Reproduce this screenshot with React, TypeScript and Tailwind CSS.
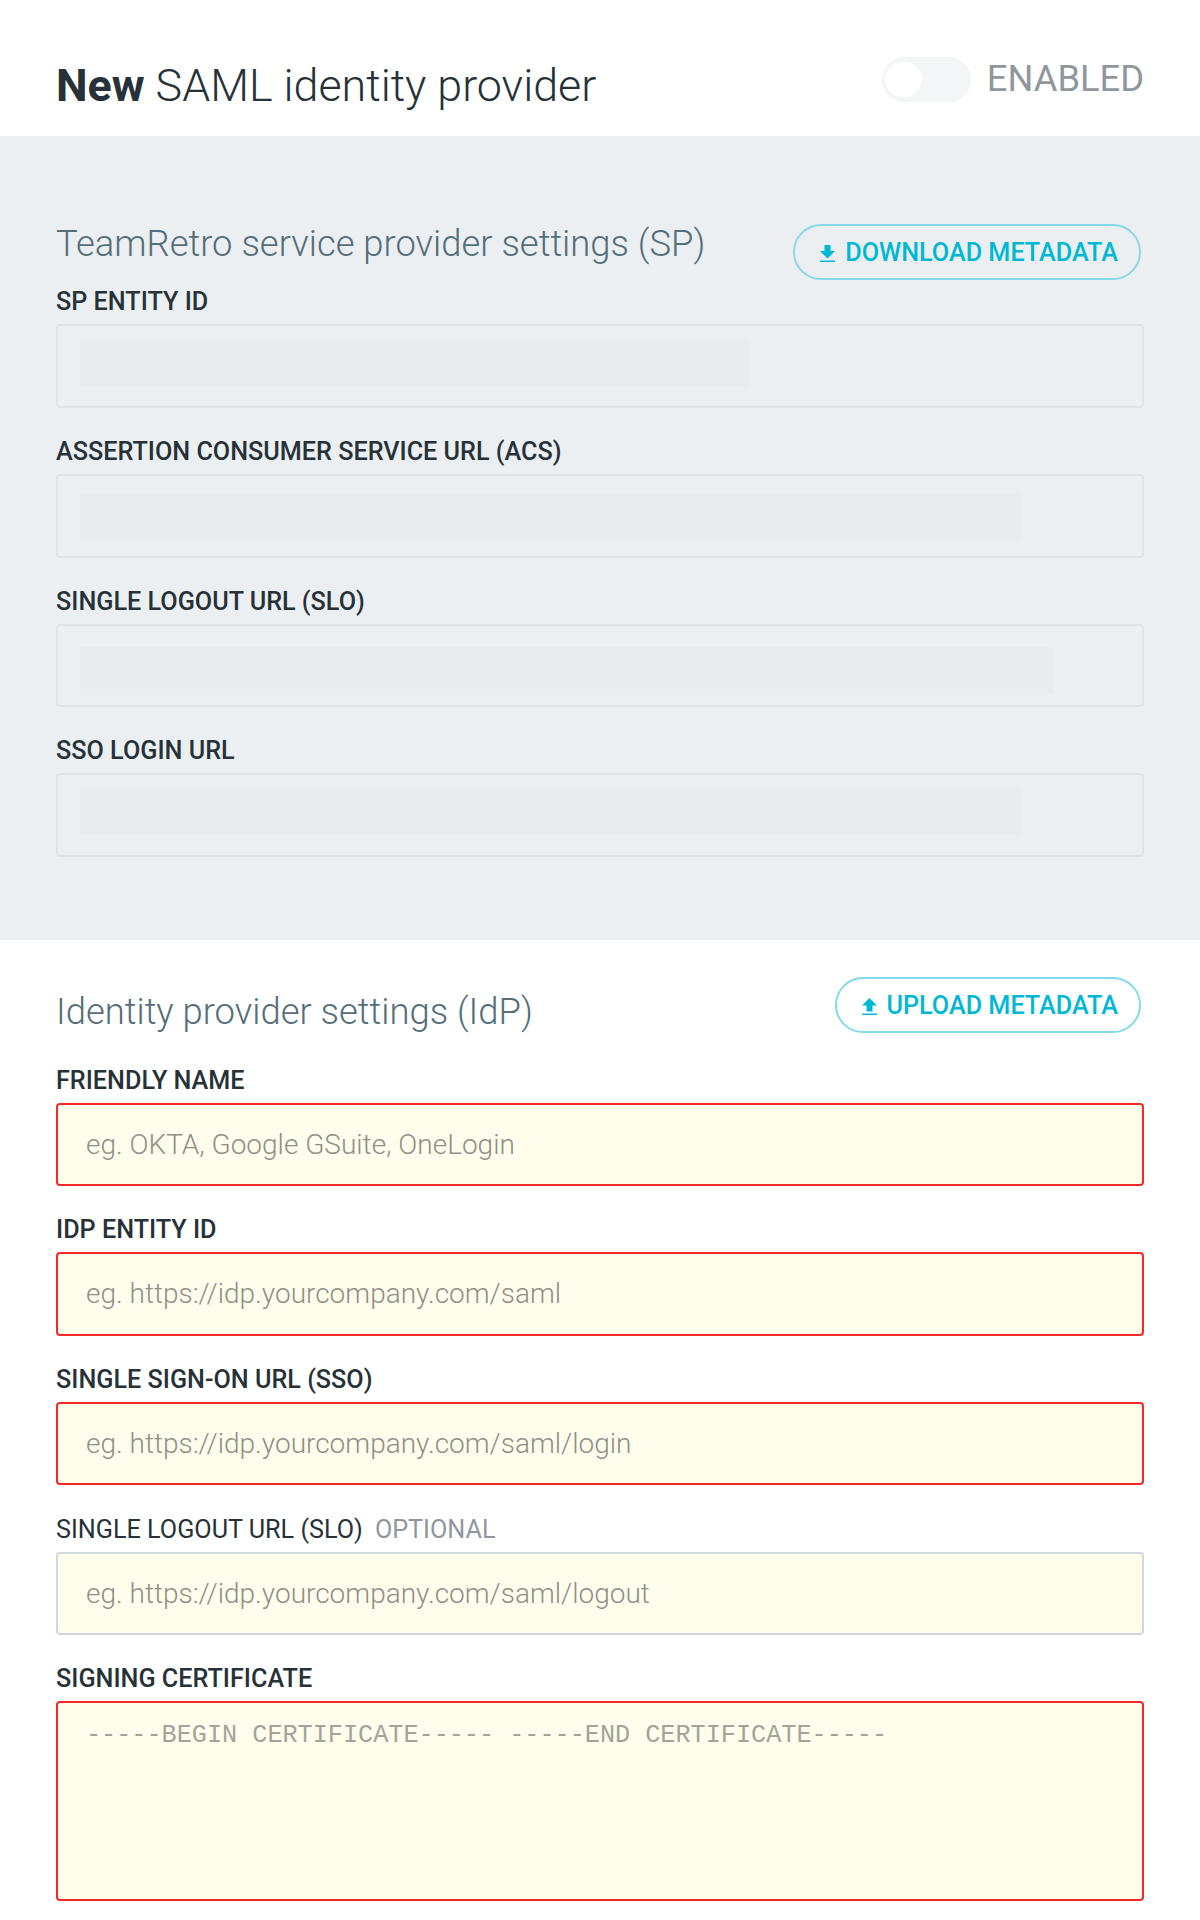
import { ReactNode } from 'react'

const DownloadIcon = () => (
  <svg viewBox="0 0 15 17" className="w-[15px] h-[17px] fill-current">
    <path d="M4.5 0h6v6H15l-7.5 7.5L0 6h4.5z" />
    <path d="M0 15.5h15V17H0z" />
  </svg>
)

const UploadIcon = () => (
  <svg viewBox="0 0 15 17" className="w-[15px] h-[17px] fill-current">
    <path d="M7.5 0L15 7.5h-4.5v6h-6v-6H0z" />
    <path d="M0 15.5h15V17H0z" />
  </svg>
)

const MetadataButton = ({ icon, label }: { icon: ReactNode; label: string }) => (
  <button className="flex items-center gap-[10px] h-[56px] pl-[25px] pr-[21px] pt-[2px] rounded-[28px] border-2 border-[#86d9e8] text-[#00b8d4] text-[25.2px] font-medium">
    {icon}
    {label}
  </button>
)

const Label = ({ children, optional }: { children: ReactNode; optional?: boolean }) => (
  <div className={`text-[25.2px] leading-[30px] text-[#263238] mb-[7px] ${optional ? 'font-normal' : 'font-medium'}`}>
    {children}
    {optional && <span className="ml-[12px] text-[#90979c]">OPTIONAL</span>}
  </div>
)

const ReadonlyField = ({ label, bar, box = 'h-[84px]' }: { label: string; bar: string; box?: string }) => (
  <div className="mb-[29px]">
    <Label>{label}</Label>
    <div className={`${box} border-2 border-[#dfe4e7] rounded-[4px] pl-[22px]`}>
      <div className={`h-[47px] bg-[#e9ecef] ${bar}`} />
    </div>
  </div>
)

type InputFieldProps = {
  label: string
  placeholder: string
  optional?: boolean
  box?: string
  space?: string
}

const InputField = ({ label, placeholder, optional, box = 'h-[84px]', space = 'mb-[29px]' }: InputFieldProps) => (
  <div className={space}>
    <Label optional={optional}>{label}</Label>
    <div className={`${box} border-2 rounded-[4px] bg-[#fffeec] flex items-center pl-[28px] text-[28px] font-light text-[#8f8f86] ${optional ? 'border-[#cfd8dc]' : 'border-[#f42a2a]'}`}>
      {placeholder}
    </div>
  </div>
)

export default function App() {
  return (
    <div className="bg-white min-h-screen font-['Roboto',sans-serif]">
      <header className="h-[136px] px-[56px] flex justify-between">
        <h1 className="text-[44.8px] leading-[52px] mt-[60px] font-light text-[#263238]">
          <span className="font-bold">New</span> SAML identity provider
        </h1>
        <div className="flex items-center gap-[16px] h-[46px] mt-[56px]">
          <div className="w-[89px] h-[45px] rounded-full bg-[#f4f6f7] border-[3px] border-[#f3f5f6] relative">
            <div className="absolute left-0 top-[2px] w-[37px] h-[35px] rounded-full bg-white" />
          </div>
          <span className="text-[36.3px] font-normal text-[#90979c]">ENABLED</span>
        </div>
      </header>

      <section className="bg-[#eceff2] h-[804px] px-[56px] pt-[88px]">
        <div className="flex justify-between items-start mr-[3px] h-[63px]">
          <h2 className="text-[36.4px] leading-[44px] -mt-[2px] font-light text-[#546e7a]">TeamRetro service provider settings (SP)</h2>
          <MetadataButton icon={<DownloadIcon />} label="DOWNLOAD METADATA" />
        </div>
        <ReadonlyField label="SP ENTITY ID" bar="w-[669px] mt-[14px]" />
        <ReadonlyField label="ASSERTION CONSUMER SERVICE URL (ACS)" bar="w-[941px] mt-[17px]" />
        <ReadonlyField label="SINGLE LOGOUT URL (SLO)" bar="w-[973px] mt-[21px]" box="h-[83px]" />
        <ReadonlyField label="SSO LOGIN URL" bar="w-[941px] mt-[13px]" />
      </section>

      <section className="px-[56px] pt-[37px]">
        <div className="flex justify-between items-start mr-[3px] h-[89px]">
          <h2 className="text-[36.4px] leading-[44px] mt-[13px] font-light text-[#546e7a]">Identity provider settings (IdP)</h2>
          <MetadataButton icon={<UploadIcon />} label="UPLOAD METADATA" />
        </div>
        <InputField label="FRIENDLY NAME" placeholder="eg. OKTA, Google GSuite, OneLogin" box="h-[83px] pt-[1px]" space="mb-[29px]" />
        <InputField label="IDP ENTITY ID" placeholder="eg. https://idp.yourcompany.com/saml" />
        <InputField label="SINGLE SIGN-ON URL (SSO)" placeholder="eg. https://idp.yourcompany.com/saml/login" box="h-[83px]" space="mb-[30px]" />
        <InputField label="SINGLE LOGOUT URL (SLO)" placeholder="eg. https://idp.yourcompany.com/saml/logout" box="h-[83px]" optional />
        <Label>SIGNING CERTIFICATE</Label>
        <div className="h-[200px] border-2 border-[#f42a2a] rounded-[4px] bg-[#fffeec] px-[28px] pt-[18px] text-[25.2px] leading-[30px] text-[#a3a397] font-['Liberation_Mono',monospace]">
          -----BEGIN CERTIFICATE----- -----END CERTIFICATE-----
        </div>
      </section>
    </div>
  )
}
